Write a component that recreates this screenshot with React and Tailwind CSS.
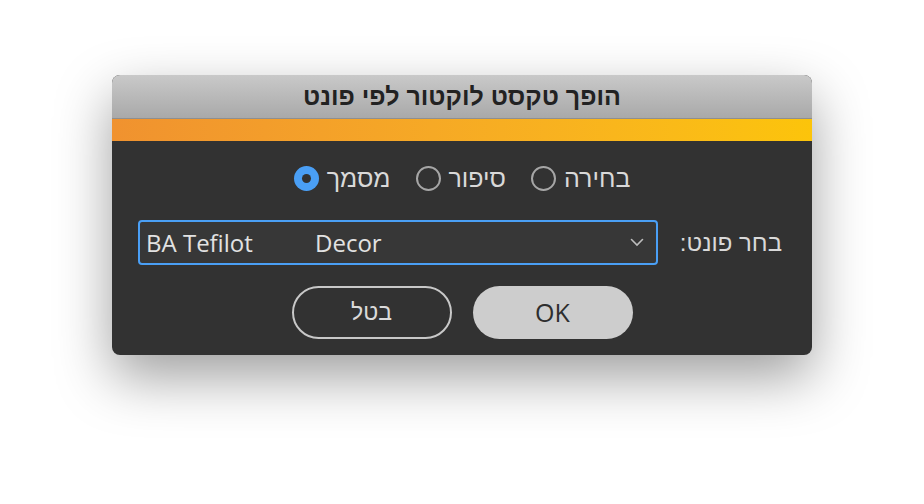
import React from "react";

const HE = "font-['Liberation_Sans','DejaVu_Sans',sans-serif]";

function Radio({ label, checked }) {
  return (
    <div className="flex items-center gap-[8px]">
      <span className={`${HE} text-[25px] leading-none text-[#d9d9d9]`}>{label}</span>
      {checked ? (
        <span className="w-[25px] h-[25px] rounded-full bg-[#4a9ff5] flex items-center justify-center">
          <span className="w-[9px] h-[9px] rounded-full bg-[#323232]" />
        </span>
      ) : (
        <span className="w-[25px] h-[25px] rounded-full border-2 border-[#a6a6a6]" />
      )}
    </div>
  );
}

export default function App() {
  return (
    <div
      className="w-[924px] h-[504px] bg-white pt-[75px]"
      style={{ fontFamily: '"Open Sans", "Liberation Sans", "DejaVu Sans", sans-serif' }}
    >
      <div
        dir="rtl"
        className="mx-auto w-[700px] h-[280px] rounded-[8px] overflow-hidden bg-[#323232] shadow-[0_22px_55px_rgba(0,0,0,0.38)] flex flex-col"
      >
        <div className="h-[44px] bg-gradient-to-b from-[#c9c9c9] to-[#a9a9a9] border-b border-[#8f8f8f] flex items-center justify-center">
          <span className={`${HE} text-[25px] font-bold text-[#222222] leading-none`}>הופך טקסט לוקטור לפי פונט</span>
        </div>
        <div className="h-[22px] bg-gradient-to-l from-[#fcc40a] to-[#f0922f]" />
        <div className="flex-1 flex flex-col pt-[25px]">
          <div className="flex justify-center items-center gap-[25px] h-[25px]">
            <Radio label="בחירה" />
            <Radio label="סיפור" />
            <Radio label="מסמך" checked />
          </div>
          <div className="flex items-center mt-[29px] pr-[30px] pl-[26px] justify-between">
            <span className={`${HE} text-[24px] text-[#d9d9d9] leading-none whitespace-nowrap`}>בחר פונט:</span>
            <div
              dir="ltr"
              className="w-[520px] h-[45px] rounded-[4px] border-2 border-[#4a9ff5] bg-[#373737] flex items-center pl-[6px] pr-[12px]"
            >
              <span className="text-[24px] text-[#e2e2e2] leading-none w-[169px]">BA Tefilot</span>
              <span className="text-[24px] text-[#e2e2e2] leading-none flex-1">Decor</span>
              <svg width="14" height="9" viewBox="0 0 14 9" fill="none">
                <path d="M1.5 1.5 L7 7 L12.5 1.5" stroke="#bdbdbd" strokeWidth="1.6" strokeLinecap="round" />
              </svg>
            </div>
          </div>
          <div dir="ltr" className="flex justify-center gap-[21px] mt-[21px]">
            <div className="w-[160px] h-[53px] rounded-full border-2 border-[#c8c8c8] flex items-center justify-center">
              <span className={`${HE} text-[23px] text-[#dadada] leading-none`}>בטל</span>
            </div>
            <div className="w-[160px] h-[53px] rounded-full bg-[#cdcdcd] flex items-center justify-center">
              <span className="text-[25px] text-[#2e2e2e] leading-none">OK</span>
            </div>
          </div>
        </div>
      </div>
    </div>
  );
}
